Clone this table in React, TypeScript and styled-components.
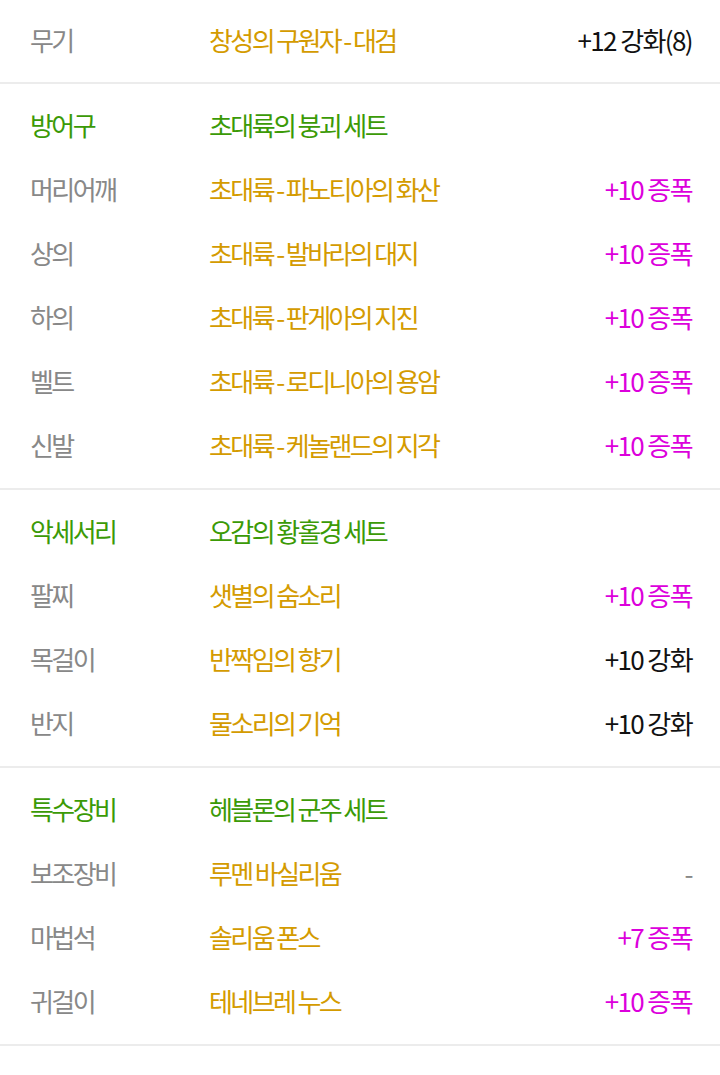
import React from 'react';
import styled, { createGlobalStyle } from 'styled-components';

const GlobalStyle = createGlobalStyle`
  html, body {
    margin: 0;
    padding: 0;
    background: #fff;
  }
  body {
    font-family: "Noto Sans CJK KR", "Noto Sans", sans-serif;
  }
`;

const List = styled.div`
  width: 720px;
  background: #fff;
`;

const Section = styled.section`
  padding: 9px 0 11px;
  border-bottom: 2px solid #ececec;

  &:first-child {
    padding: 8px 0 10px;
  }
`;

const Row = styled.div`
  display: grid;
  grid-template-columns: 179px 1fr auto;
  align-items: center;
  height: 64px;
  padding: 0 28px 0 30px;
  font-size: 26px;
  letter-spacing: -2.6px;
  line-height: 1;
`;

const Label = styled.span<{ $head?: boolean }>`
  color: ${(p) => (p.$head ? '#3b9a06' : '#888')};
`;

const Name = styled.span<{ $head?: boolean }>`
  color: ${(p) => (p.$head ? '#3b9a06' : '#d49b00')};
  white-space: nowrap;
`;

const Value = styled.span<{ $kind?: 'amp' | 'enh' | 'none' }>`
  text-align: right;
  white-space: nowrap;
  letter-spacing: -1.6px;
  color: ${(p) =>
    p.$kind === 'amp' ? '#dc00dc' : p.$kind === 'none' ? '#888' : '#111'};
`;

type Item = { label: string; name: string; value?: string; kind?: 'amp' | 'enh' | 'none'; head?: boolean };

const sections: Item[][] = [
  [{ label: '무기', name: '창성의 구원자 - 대검', value: '+12 강화(8)', kind: 'enh' }],
  [
    { label: '방어구', name: '초대륙의 붕괴 세트', head: true },
    { label: '머리어깨', name: '초대륙 - 파노티아의 화산', value: '+10 증폭', kind: 'amp' },
    { label: '상의', name: '초대륙 - 발바라의 대지', value: '+10 증폭', kind: 'amp' },
    { label: '하의', name: '초대륙 - 판게아의 지진', value: '+10 증폭', kind: 'amp' },
    { label: '벨트', name: '초대륙 - 로디니아의 용암', value: '+10 증폭', kind: 'amp' },
    { label: '신발', name: '초대륙 - 케놀랜드의 지각', value: '+10 증폭', kind: 'amp' },
  ],
  [
    { label: '악세서리', name: '오감의 황홀경 세트', head: true },
    { label: '팔찌', name: '샛별의 숨소리', value: '+10 증폭', kind: 'amp' },
    { label: '목걸이', name: '반짝임의 향기', value: '+10 강화', kind: 'enh' },
    { label: '반지', name: '물소리의 기억', value: '+10 강화', kind: 'enh' },
  ],
  [
    { label: '특수장비', name: '헤블론의 군주 세트', head: true },
    { label: '보조장비', name: '루멘 바실리움', value: '-', kind: 'none' },
    { label: '마법석', name: '솔리움 폰스', value: '+7 증폭', kind: 'amp' },
    { label: '귀걸이', name: '테네브레 누스', value: '+10 증폭', kind: 'amp' },
  ],
];

const App = () => {
  return (
    <>
      <GlobalStyle />
      <List>
        {sections.map((items, i) => (
          <Section key={i}>
            {items.map((item) => (
              <Row key={item.label}>
                <Label $head={item.head}>{item.label}</Label>
                <Name $head={item.head}>{item.name}</Name>
                <Value $kind={item.kind}>{item.value}</Value>
              </Row>
            ))}
          </Section>
        ))}
      </List>
    </>
  );
};

export default App;
